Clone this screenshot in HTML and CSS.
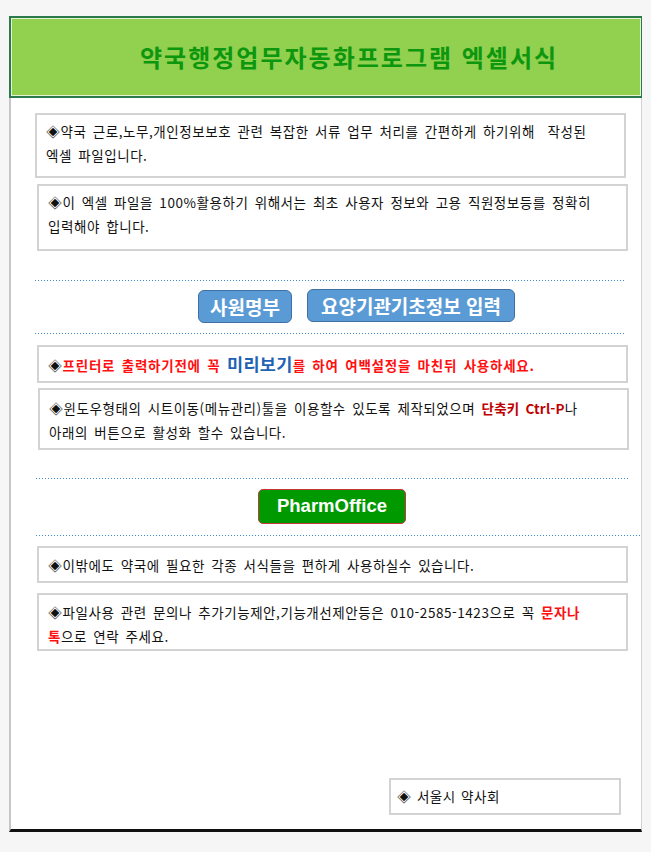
FILE: index.html
```html
<!DOCTYPE html>
<html lang="ko">
<head>
<meta charset="utf-8">
<title>약국행정업무자동화프로그램 엑셀서식</title>
<link rel="stylesheet" href="styles.css">
</head>
<body>
<div class="sheet">
  <header class="banner">
    <h1 class="title">약국행정업무자동화프로그램 엑셀서식</h1>
  </header>
  <main class="page">
    <div class="note note-1">◈약국 근로,노무,개인정보보호 관련 복잡한 서류 업무 처리를 간편하게 하기위해&nbsp; 작성된<br>엑셀 파일입니다.</div>
    <div class="note note-2">◈이 엑셀 파일을 100%활용하기 위해서는 최초 사용자 정보와 고용 직원정보등를 정확히<br>입력해야 합니다.</div>
    <div class="dots dots-1"></div>
    <div class="btn-row">
      <a class="btn-blue btn-staff">사원명부</a>
      <a class="btn-blue btn-info">요양기관기초정보 입력</a>
    </div>
    <div class="dots dots-2"></div>
    <div class="note note-3">◈<span class="red">프린터로 출력하기전에 꼭 </span><span class="preview">미리보기</span><span class="red">를 하여 여백설정을 마친뒤 사용하세요.</span></div>
    <div class="note note-4">◈윈도우형태의 시트이동(메뉴관리)툴을 이용할수 있도록 제작되었으며 <span class="darkred">단축키 Ctrl-P</span>나<br>아래의 버튼으로 활성화 할수 있습니다.</div>
    <div class="dots dots-3"></div>
    <div class="btn-row btn-row-2">
      <a class="btn-green">PharmOffice</a>
    </div>
    <div class="dots dots-4"></div>
    <div class="note note-5">◈이밖에도 약국에 필요한 각종 서식들을 편하게 사용하실수 있습니다.</div>
    <div class="note note-6">◈파일사용 관련 문의나 추가기능제안,기능개선제안등은 010-2585-1423으로 꼭 <span class="redb">문자나<br>톡</span>으로 연락 주세요.</div>
    <div class="sign">◈ 서울시 약사회</div>
  </main>
</div>
</body>
</html>
```

FILE: styles.css
```css
html, body {
  margin: 0;
  padding: 0;
  background: #f6f6f6;
}

body {
  font-family: "Noto Sans CJK KR", "Noto Sans", sans-serif;
  color: #111;
}

.sheet {
  margin: 16px 0 0 9px;
  width: 633px;
}

.banner {
  box-sizing: border-box;
  height: 82px;
  background: #92d050;
  border: 2px solid #2b7a4b;
  border-right: 1px solid #2b7a4b;
  box-shadow: inset 0 0 0 1px #e3f3d3;
  display: flex;
  align-items: center;
  padding-left: 129px;
}

.title {
  margin: 0;
  font-size: 24px;
  font-weight: 700;
  color: #0d970e;
  letter-spacing: 2px;
  line-height: 1;
}

.page {
  box-sizing: border-box;
  height: 734px;
  background-color: #fff;
  border-left: 2px solid #c6c6c6;
  border-right: 1px solid #d2d2d2;
  border-bottom: 3px solid #111;
  padding-top: 15px;
}

.note {
  box-sizing: border-box;
  margin-left: 24px;
  width: 591px;
  border: 2px solid #d3d3d3;
  padding: 4px 9px 0;
  font-size: 13.5px;
  letter-spacing: 0.55px;
  word-spacing: 2px;
  line-height: 24px;
  color: #111;
  white-space: nowrap;
}

.note-1 { height: 65px; }
.note-2 { height: 67px; margin-top: 6px; margin-left: 26px; }
.note-3 { height: 38px; margin-top: 11px; margin-left: 26px; padding-top: 5px; }
.note-4 { height: 62px; margin-top: 5px; margin-left: 27px; padding-top: 6px; }
.note-5 { height: 37px; margin-top: 10px; margin-left: 26px; padding-top: 5px; }
.note-6 { height: 58px; margin-top: 10px; margin-left: 26px; padding-top: 5px; }

.red {
  color: #ff1010;
  font-weight: 700;
  letter-spacing: 0.75px;
}

.preview {
  color: #1f63b4;
  font-weight: 700;
  font-size: 17.5px;
  letter-spacing: 0.3px;
}

.darkred {
  color: #c00000;
  font-weight: 700;
  letter-spacing: 0.2px;
}

.redb {
  color: #ff1010;
  font-weight: 700;
}

.dots {
  margin-left: 24px;
  width: 591px;
  height: 1px;
  background-image: linear-gradient(to right, #3f8ad0 1px, transparent 1px);
  background-size: 3px 1px;
}

.dots-1 { margin-top: 29px; }
.dots-2 { margin-top: 10px; }
.dots-3 { margin-top: 28px; margin-left: 25px; width: 592px; }
.dots-4 { margin-top: 11px; margin-left: 25px; width: 605px; }

.btn-row {
  display: flex;
  gap: 15px;
  margin-top: 8px;
  padding-left: 187px;
  align-items: flex-start;
}

.btn-blue {
  box-sizing: border-box;
  height: 33px;
  display: flex;
  align-items: center;
  justify-content: center;
  background: #5b9bd5;
  border: 1px solid #3f72a3;
  border-radius: 6px;
  color: #fff;
  font-weight: 700;
  font-size: 19px;
  line-height: 1;
}

.btn-staff { width: 94px; margin-top: 1px; }
.btn-info { width: 208px; }

.btn-row-2 {
  margin-top: 10px;
  padding-left: 247px;
}

.btn-green {
  box-sizing: border-box;
  width: 148px;
  height: 35px;
  display: flex;
  align-items: center;
  justify-content: center;
  background: #009a00;
  border: 1px solid #c8373a;
  border-radius: 5px;
  color: #fff;
  font-family: "Liberation Sans", Arial, sans-serif;
  font-weight: 700;
  font-size: 18.5px;
  line-height: 1;
}

.sign {
  box-sizing: border-box;
  margin: 127px 0 0 378px;
  width: 232px;
  height: 37px;
  border: 2px solid #d3d3d3;
  padding: 6px 0 0 6px;
  font-size: 13.5px;
  letter-spacing: 0.55px;
  word-spacing: 1px;
  line-height: 20px;
  color: #111;
}
```
